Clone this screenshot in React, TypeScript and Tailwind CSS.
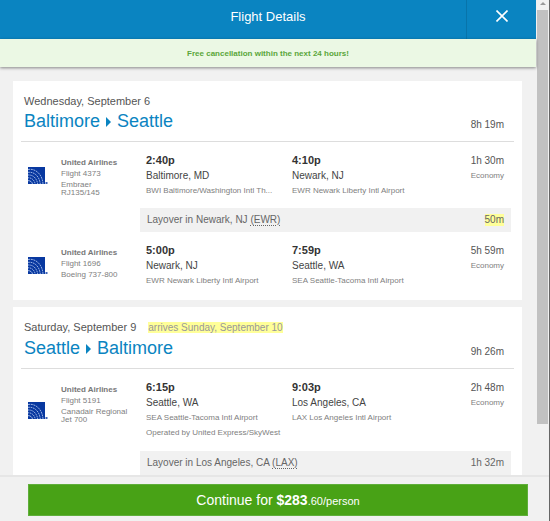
import React from "react";

type Stop = { time: string; city: string; airport: string; operatedBy?: string };
type LegData = {
  flight: string;
  aircraft: string;
  from: Stop;
  to: Stop;
  duration: string;
};
type LayoverData = { city: string; code: string; duration: string; short?: boolean };

function UnitedLogo() {
  return (
    <svg viewBox="0 0 20 17" className="h-[17px] w-5" role="img" aria-label="United Airlines">
      <rect width="17" height="17" fill="#0838a0" />
      <g fill="none" stroke="#a9c0ea" strokeWidth="0.9">
        <path d="M0 2.500C8 1 14.500 8 15 17" strokeDasharray="2 0.700" />
        <path d="M0 5.300C7 4.500 11.500 10 12.300 17" strokeDasharray="1.800 0.700" />
        <path d="M0 8C5.500 7.600 9 12 9.700 17" strokeDasharray="1.500 0.700" />
        <path d="M0 10.800C4 10.600 6.500 13.500 7.200 17" strokeDasharray="1.300 0.700" />
        <path d="M0 13.600C2.500 13.600 4 15 4.500 17" />
      </g>
      <rect x="17.500" y="15" width="2" height="2" fill="#3c62b5" />
    </svg>
  );
}

function StopInfo({ stop }: { stop: Stop }) {
  return (
    <div className="min-w-0 flex-1">
      <div className="text-[11px] leading-[15px] font-bold text-[#333]">{stop.time}</div>
      <div className="text-[10px] leading-[15px] text-[#444]">{stop.city}</div>
      <div className="text-[8px] leading-[15px] whitespace-nowrap text-[#808080]">{stop.airport}</div>
      {stop.operatedBy && (
        <div className="text-[8px] leading-4 whitespace-nowrap text-[#808080]">{stop.operatedBy}</div>
      )}
    </div>
  );
}

function Leg({ leg }: { leg: LegData }) {
  return (
    <div className="flex pt-[11px] pr-[18px] pb-[10px] pl-[15px]">
      <div className="w-[33px] shrink-0 self-center">
        <UnitedLogo />
      </div>
      <div className="w-[85px] shrink-0 pt-1 pr-2 text-[8px] text-[#808080]">
        <div className="leading-[11px] font-bold text-[#777]">United Airlines</div>
        <div className="leading-[11px]">{leg.flight}</div>
        <div className="pt-[2px] leading-[8px] whitespace-pre-line">{leg.aircraft}</div>
      </div>
      <StopInfo stop={leg.from} />
      <StopInfo stop={leg.to} />
      <div className="w-[66px] shrink-0 text-right">
        <div className="text-[10px] leading-[15px] text-[#555]">{leg.duration}</div>
        <div className="text-[8px] leading-[15px] text-[#808080]">Economy</div>
      </div>
    </div>
  );
}

function Layover({ layover }: { layover: LayoverData }) {
  return (
    <div className="mr-[11px] ml-[127px] flex h-6 items-center justify-between bg-[#f1f1f1] px-[7px] text-[10px] leading-3 text-[#666]">
      <span>
        Layover in {layover.city}{" "}
        <abbr title={layover.city} className="underline decoration-dotted underline-offset-2">
          ({layover.code})
        </abbr>
      </span>
      {layover.short ? <mark className="bg-[#ffff99] text-[#666]">{layover.duration}</mark> : <span>{layover.duration}</span>}
    </div>
  );
}

function Trip(props: {
  date: string;
  arrives?: string;
  from: string;
  to: string;
  duration: string;
  children: React.ReactNode;
}) {
  return (
    <section className="bg-white pb-[2px]">
      <header className="mx-2 flex items-end justify-between border-b border-[#ddd] pt-3 pr-[10px] pb-2 pl-[3px]">
        <div>
          <p className="text-[11px] leading-4 text-[#555]">
            {props.date}
            {props.arrives && <mark className="ml-3 bg-[#ffff99] text-[10px] text-[#999]">{props.arrives}</mark>}
          </p>
          <h2 className="flex items-center gap-[6px] text-[18px] leading-6 text-[#0a84c1]">
            {props.from}
            <svg viewBox="0 0 5 10" className="mt-[2px] h-[10px] w-[5px]" aria-hidden="true">
              <path d="M0 0L5 5L0 10Z" fill="currentColor" />
            </svg>
            {props.to}
          </h2>
        </div>
        <div className="text-[10px] leading-4 text-[#555]">{props.duration}</div>
      </header>
      {props.children}
    </section>
  );
}

export default function App() {
  return (
    <div className="flex h-screen flex-col overflow-hidden border-r border-[#666] bg-[#f1f1f1] font-['Liberation_Sans',Arial,sans-serif]">
      <div className="flex min-h-0 flex-1">
        <div className="flex min-w-0 flex-1 flex-col">
          <header className="grid h-[39px] shrink-0 grid-cols-[70px_1fr_70px] bg-[#0a84c1] text-white">
            <h1 className="col-start-2 text-center text-[13px] leading-[34px]">Flight Details</h1>
            <button type="button" aria-label="Close" className="flex items-center justify-center border-l border-[#0874aa] pb-[7px]">
              <svg viewBox="0 0 12 12" className="h-3 w-3" aria-hidden="true">
                <path d="M0.500 0.500L11.500 11.500M11.500 0.500L0.500 11.500" stroke="white" strokeWidth="1.6" fill="none" />
              </svg>
            </button>
          </header>
          <p className="z-10 h-7 shrink-0 bg-[#ebf8e4] text-center text-[8px] leading-[29px] font-bold text-[#5aa63a] shadow-[0_1px_3px_rgba(0,0,0,0.45)]">
            Free cancellation within the next 24 hours!
          </p>
          <main className="flex min-h-0 flex-1 flex-col gap-[7px] overflow-y-auto pt-[14px] pr-[14px] pl-[13px] [scrollbar-width:none]">
            <Trip date="Wednesday, September 6" from="Baltimore" to="Seattle" duration="8h 19m">
              <Leg
                leg={{
                  flight: "Flight 4373",
                  aircraft: "Embraer\nRJ135/145",
                  from: { time: "2:40p", city: "Baltimore, MD", airport: "BWI Baltimore/Washington Intl Th..." },
                  to: { time: "4:10p", city: "Newark, NJ", airport: "EWR Newark Liberty Intl Airport" },
                  duration: "1h 30m",
                }}
              />
              <Layover layover={{ city: "Newark, NJ", code: "EWR", duration: "50m", short: true }} />
              <Leg
                leg={{
                  flight: "Flight 1696",
                  aircraft: "Boeing 737-800",
                  from: { time: "5:00p", city: "Newark, NJ", airport: "EWR Newark Liberty Intl Airport" },
                  to: { time: "7:59p", city: "Seattle, WA", airport: "SEA Seattle-Tacoma Intl Airport" },
                  duration: "5h 59m",
                }}
              />
            </Trip>
            <Trip
              date="Saturday, September 9"
              arrives="arrives Sunday, September 10"
              from="Seattle"
              to="Baltimore"
              duration="9h 26m"
            >
              <Leg
                leg={{
                  flight: "Flight 5191",
                  aircraft: "Canadair Regional\nJet 700",
                  from: {
                    time: "6:15p",
                    city: "Seattle, WA",
                    airport: "SEA Seattle-Tacoma Intl Airport",
                    operatedBy: "Operated by United Express/SkyWest",
                  },
                  to: { time: "9:03p", city: "Los Angeles, CA", airport: "LAX Los Angeles Intl Airport" },
                  duration: "2h 48m",
                }}
              />
              <Layover layover={{ city: "Los Angeles, CA", code: "LAX", duration: "1h 32m" }} />
            </Trip>
          </main>
        </div>
        <div className="flex w-[13px] shrink-0 flex-col items-center" aria-hidden="true">
          <div className="flex h-[10px] items-start pt-[2px]">
            <svg viewBox="0 0 6 3" className="h-[3px] w-[6px]">
              <path d="M0 3L3 0L6 3Z" fill="#999" />
            </svg>
          </div>
          <div className="mb-[51px] w-[11px] flex-1 bg-[#c1c1c1]" />
        </div>
      </div>
      <footer className="shrink-0 border-t-2 border-[#e6e6e6] pt-[7px] pr-[21px] pb-[5px] pl-7">
        <button type="button" className="h-8 w-full border border-[#5fae3a] bg-[#48a216] text-[14px] text-white">
          Continue for <b>$283</b>
          <span className="text-[11px]">.60/person</span>
        </button>
      </footer>
    </div>
  );
}
